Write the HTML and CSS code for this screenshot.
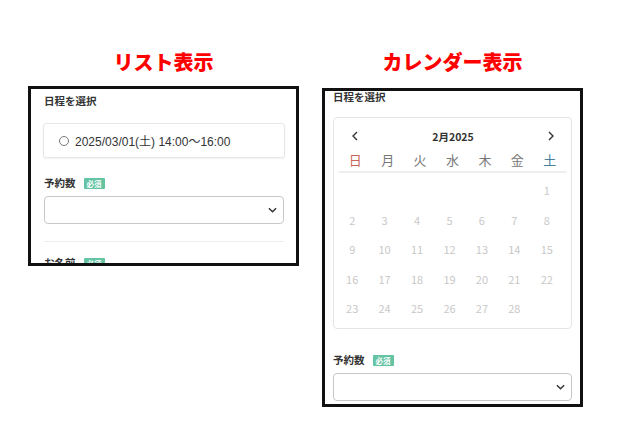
FILE: index.html
```html
<!DOCTYPE html>
<html lang="ja">
<head>
<meta charset="utf-8">
<link rel="stylesheet" href="styles.css">
</head>
<body>
<div class="page">
  <section class="col col-list">
    <h1 class="title">リスト表示</h1>
    <div class="frame frame-list">
      <div class="label">日程を選択</div>
      <div class="slot">
        <span class="radio"></span>
        <span class="slot-text">2025/03/01(土) 14:00〜16:00</span>
      </div>
      <div class="label label-req">予約数 <span class="badge">必須</span></div>
      <div class="select"><svg class="chev" viewBox="0 0 10 6" width="9" height="6"><path d="M1 1l4 4 4-4" fill="none" stroke="#333" stroke-width="1.6"/></svg></div>
      <div class="divider"></div>
      <div class="label label-name">お名前 <span class="badge">必須</span></div>
    </div>
  </section>
  <section class="col col-cal">
    <h1 class="title">カレンダー表示</h1>
    <div class="frame frame-cal">
      <div class="label label-top">日程を選択</div>
      <div class="cal">
        <div class="cal-head">
          <svg class="nav" viewBox="0 0 6 10" width="6" height="10"><path d="M5 1L1 5l4 4" fill="none" stroke="#333" stroke-width="1.4"/></svg>
          <span class="month">2月2025</span>
          <svg class="nav" viewBox="0 0 6 10" width="6" height="10"><path d="M1 1l4 4-4 4" fill="none" stroke="#333" stroke-width="1.4"/></svg>
        </div>
        <div class="week">
          <span class="sun">日</span><span>月</span><span>火</span><span>水</span><span>木</span><span>金</span><span class="sat">土</span>
        </div>
        <div class="days">
          <span></span><span></span><span></span><span></span><span></span><span></span><span>1</span>
          <span>2</span><span>3</span><span>4</span><span>5</span><span>6</span><span>7</span><span>8</span>
          <span>9</span><span>10</span><span>11</span><span>12</span><span>13</span><span>14</span><span>15</span>
          <span>16</span><span>17</span><span>18</span><span>19</span><span>20</span><span>21</span><span>22</span>
          <span>23</span><span>24</span><span>25</span><span>26</span><span>27</span><span>28</span><span></span>
        </div>
      </div>
      <div class="label label-req2">予約数 <span class="badge">必須</span></div>
      <div class="select"><svg class="chev" viewBox="0 0 10 6" width="9" height="6"><path d="M1 1l4 4 4-4" fill="none" stroke="#333" stroke-width="1.6"/></svg></div>
    </div>
  </section>
</div>
</body>
</html>
```
FILE: styles.css
```css
* { box-sizing: border-box; }
html, body { margin: 0; padding: 0; background: #fff; }
body { font-family: "Noto Sans CJK JP", "Noto Sans", sans-serif; color: #333; }

.page {
  display: flex;
  align-items: flex-start;
  gap: 23px;
  padding-left: 28px;
  padding-top: 48px;
}
.col { display: flex; flex-direction: column; }
.col-list { width: 271px; }
.col-cal { width: 261px; }

.title {
  margin: 0;
  height: 38px;
  font-size: 20px;
  line-height: 28px;
  font-weight: 900;
  color: #ff0000;
  text-align: center;
}

.frame {
  border: 3px solid #111;
  overflow: hidden;
  background: #fff;
}
.frame-list { height: 180px; padding: 5px 12px 0 13px; }
.frame-cal { height: 319px; margin-top: 2px; padding: 0 8px; }

.label {
  font-size: 10.5px;
  font-weight: 700;
  line-height: 14px;
  height: 14px;
  display: flex;
  align-items: center;
  color: #333;
}
.label-top { line-height: 12px; height: 12px; }

.badge {
  display: inline-block;
  margin-left: 8px;
  background: #63c3a3;
  color: #fff;
  font-size: 7.5px;
  line-height: 11px;
  height: 11px;
  padding: 0 3px;
  border-radius: 1px;
  font-weight: 700;
}

.slot {
  margin-top: 15px;
  margin-left: -1px;
  width: 242px;
  height: 35px;
  border: 1px solid #e6e6e6;
  border-radius: 3px;
  box-shadow: 0 1px 2px rgba(0,0,0,0.06);
  display: flex;
  align-items: center;
  padding-left: 15px;
}
.radio {
  width: 10px; height: 10px;
  border: 1px solid #777;
  border-radius: 50%;
  margin-right: 6px;
}
.slot-text {
  font-family: "Liberation Sans", "Noto Sans CJK JP", sans-serif;
  font-size: 12px;
  color: #333;
}

.label-req { margin-top: 18px; }
.select {
  margin-top: 6px;
  width: 240px;
  height: 28px;
  border: 1px solid #c8c8c8;
  border-radius: 4px;
  display: flex;
  align-items: center;
  justify-content: flex-end;
  padding-right: 6px;
}
.frame-cal .select { width: 239px; }
.divider { margin-top: 17px; height: 1px; background: #eee; }
.label-name { margin-top: 14px; }

.cal {
  margin-top: 14px;
  width: 239px;
  height: 212px;
  border: 1px solid #e4e4e4;
  border-radius: 4px;
  padding: 10px 5px 0 5px;
}
.cal-head {
  height: 16px;
  display: flex;
  align-items: center;
  justify-content: space-between;
  padding: 0 12px 0 13px;
}
.month { font-size: 10.5px; font-weight: 700; color: #333; }
.week {
  margin-top: 6px;
  display: grid;
  grid-template-columns: repeat(7, 1fr);
  border-bottom: 2px solid #eee;
  height: 23px;
}
.week span {
  text-align: center;
  font-size: 13px;
  line-height: 20px;
  color: #777;
  font-weight: 400;
}
.week span.sun { color: #c9655a; }
.week span.sat { color: #4a7c9b; }
.days {
  margin-top: 3px;
  display: grid;
  grid-template-columns: repeat(7, 1fr);
  grid-auto-rows: 29.5px;
}
.days span {
  text-align: center;
  font-size: 11px;
  line-height: 29.5px;
  color: #c8c8c8;
  padding-right: 6px;
}
.label-req2 { margin-top: 24px; }
```
